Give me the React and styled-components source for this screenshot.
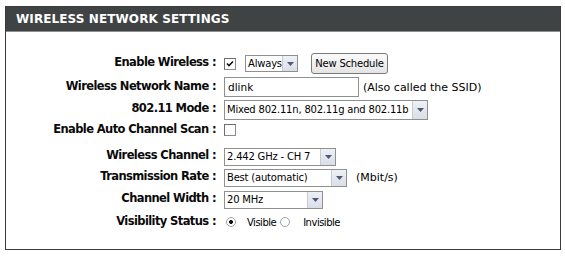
import React from 'react'
import styled, { createGlobalStyle } from 'styled-components'

const GlobalStyle = createGlobalStyle`
    html, body {
        margin: 0;
        padding: 0;
        background: #ffffff;
    }
    body {
        font-family: "DejaVu Sans", Verdana, sans-serif;
        color: #000;
    }
`;

const rows = [
    { label: 'Enable Wireless :', height: 23 },
    { label: 'Wireless Network Name :', height: 24 },
    { label: '802.11 Mode :', height: 21 },
    { label: 'Enable Auto Channel Scan :', height: 20 },
    { label: 'Wireless Channel :', height: 21, gap: 6 },
    { label: 'Transmission Rate :', height: 21 },
    { label: 'Channel Width :', height: 23 },
    { label: 'Visibility Status :', height: 22 },
]

const Arrow = () => (
    <svg width="7" height="4" viewBox="0 0 7 4">
        <path d="M0 0 H7 L3.5 4 Z" fill="#4d5a72" />
    </svg>
)

const Select = ({ width, height, children }) => (
    <SelectBox $width={width} $height={height}>
        <SelectText>{children}</SelectText>
        <SelectArrow><Arrow /></SelectArrow>
    </SelectBox>
)

const Check = ({ checked }) => (
    <CheckBox>
        {checked && (
            <svg width="8" height="8" viewBox="0 0 8 8">
                <path d="M1 3.5 L3 5.5 L7 1.5" stroke="#111" strokeWidth="1.6" fill="none" />
            </svg>
        )}
    </CheckBox>
)

const renderControls = (i) => {
    switch (i) {
        case 0:
            return (
                <Controls>
                    <Check checked />
                    <Spacer $w={9} />
                    <Select width={53} height={17}>Always</Select>
                    <Spacer $w={13} />
                    <Button>New Schedule</Button>
                </Controls>
            )
        case 1:
            return (
                <Controls>
                    <TextInput>dlink</TextInput>
                    <Spacer $w={4} />
                    <Note>(Also called the SSID)</Note>
                </Controls>
            )
        case 2:
            return (
                <Controls>
                    <Select width={204} height={20}>Mixed 802.11n, 802.11g and 802.11b</Select>
                </Controls>
            )
        case 3:
            return (
                <Controls>
                    <Check />
                </Controls>
            )
        case 4:
            return (
                <Controls>
                    <Select width={112}>2.442 GHz - CH 7</Select>
                </Controls>
            )
        case 5:
            return (
                <Controls>
                    <Select width={123}>Best (automatic)</Select>
                    <Spacer $w={9} />
                    <Note>(Mbit/s)</Note>
                </Controls>
            )
        case 6:
            return (
                <Controls>
                    <Select width={99}>20 MHz</Select>
                </Controls>
            )
        default:
            return (
                <Controls>
                    <Spacer $w={2} />
                    <Radio $checked />
                    <Spacer $w={11} />
                    <RadioLabel>Visible</RadioLabel>
                    <Spacer $w={4} />
                    <Radio />
                    <Spacer $w={13} />
                    <RadioLabel>Invisible</RadioLabel>
                </Controls>
            )
    }
}

const App = () => {
    return (
        <>
            <GlobalStyle />
            <Panel>
                <Header>WIRELESS NETWORK SETTINGS</Header>
                <Form>
                    {rows.map((row, i) => (
                        <Row key={row.label} $height={row.height} $gap={row.gap}>
                            <Label>{row.label}</Label>
                            {renderControls(i)}
                        </Row>
                    ))}
                </Form>
            </Panel>
        </>
    )
}

export default App

const Panel = styled.div`
    box-sizing: border-box;
    width: 556px;
    height: 244px;
    margin: 6px 0 0 5px;
    border: 1px solid #3a3c3c;
`;

const Header = styled.div`
    height: 24px;
    line-height: 24px;
    padding-left: 10px;
    background-color: #404343;
    border-bottom: 1px solid #8c8e8e;
    color: #ffffff;
    font-size: 12px;
    font-weight: 700;
    letter-spacing: 0.1px;
`;

const Form = styled.div`
    display: flex;
    flex-direction: column;
    padding-top: 20px;
`;

const Row = styled.div`
    display: grid;
    grid-template-columns: 210px 1fr;
    column-gap: 8px;
    align-items: center;
    height: ${p => p.$height}px;
    margin-top: ${p => p.$gap || 0}px;
`;

const Label = styled.div`
    text-align: right;
    font-size: 11.5px;
    font-weight: 700;
    letter-spacing: -0.6px;
    white-space: nowrap;
    color: #0a0a0a;
    margin-top: -3px;
`;

const Controls = styled.div`
    display: flex;
    align-items: center;
`;

const Spacer = styled.span`
    display: inline-block;
    width: ${p => p.$w}px;
    flex: none;
`;

const SelectBox = styled.div`
    box-sizing: border-box;
    display: flex;
    width: ${p => p.$width}px;
    height: ${p => p.$height || 18}px;
    border: 1px solid #8f9090;
    background: #ffffff;
`;

const SelectText = styled.div`
    flex: 1;
    padding-left: 2px;
    font-size: 10px;
    letter-spacing: -0.2px;
    white-space: nowrap;
    overflow: hidden;
    display: flex;
    align-items: center;
`;

const SelectArrow = styled.div`
    width: 14px;
    display: flex;
    align-items: center;
    justify-content: center;
    border-left: 1px solid #c6cbd3;
    background: linear-gradient(#eef1f6, #d9dee7);
`;

const CheckBox = styled.span`
    box-sizing: border-box;
    width: 12px;
    height: 12px;
    display: inline-flex;
    align-items: center;
    justify-content: center;
    border: 1px solid #8a8a8a;
    border-top-color: #6e6e6e;
    border-left-color: #6e6e6e;
    background: #ffffff;
`;

const Button = styled.div`
    box-sizing: border-box;
    width: 77px;
    height: 21px;
    display: flex;
    align-items: center;
    justify-content: center;
    border: 1px solid #7a7a7a;
    border-radius: 3px;
    background: linear-gradient(#fbfbfb, #e4e4e4);
    font-size: 10px;
    letter-spacing: -0.2px;
`;

const TextInput = styled.div`
    box-sizing: border-box;
    width: 135px;
    height: 20px;
    padding-left: 3px;
    display: flex;
    align-items: center;
    border: 1px solid #8f9090;
    font-size: 10.5px;
`;

const Note = styled.span`
    font-size: 11px;
    white-space: nowrap;
`;

const Radio = styled.span`
    box-sizing: border-box;
    width: 10px;
    height: 10px;
    border-radius: 50%;
    border: 1px solid #a0a0a0;
    background: ${p => p.$checked ? 'radial-gradient(circle, #111 0 1.8px, #fff 2.2px)' : '#fff'};
`;

const RadioLabel = styled.span`
    font-size: 10px;
    letter-spacing: -0.5px;
    white-space: nowrap;
`;
